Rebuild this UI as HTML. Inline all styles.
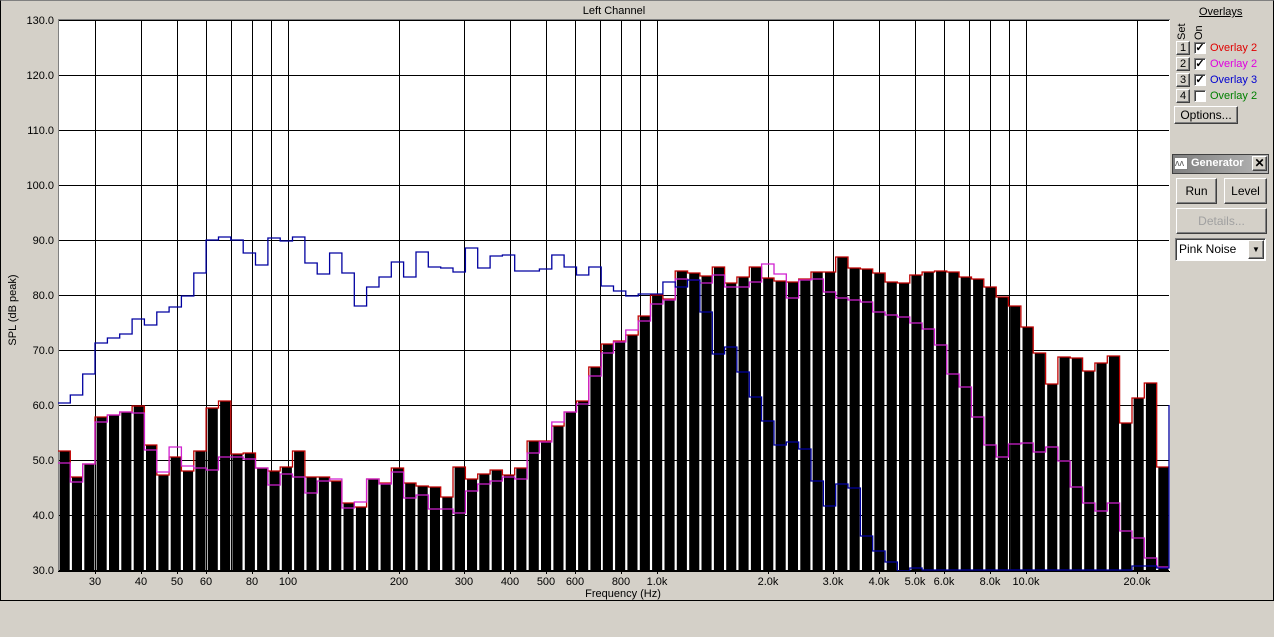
<!DOCTYPE html>
<html><head><meta charset="utf-8"><style>
body{margin:0;width:1274px;height:637px;background:#d4d0c8;font-family:"Liberation Sans",Arial,sans-serif;font-size:11px;overflow:hidden;position:relative}
.a{position:absolute}
.btn{position:absolute;background:#d4d0c8;border:1px solid;border-color:#fff #404040 #404040 #fff;box-shadow:inset -1px -1px 0 #808080;text-align:center;box-sizing:border-box;font-size:12px}
.cb{position:absolute;width:12px;height:12px;background:#fff;border:1px solid;border-color:#808080 #fff #fff #808080;box-shadow:inset 1px 1px 0 #404040;box-sizing:border-box;font-size:11px;line-height:10px;text-align:center;font-weight:bold}
</style></head><body>
<div class="a" style="left:0;top:0;width:1272px;height:599px;border:1px solid #000;border-top-color:#808080"></div>
<svg class="a" style="left:0;top:0" width="1274" height="637" id="s"></svg>
<div class="a" style="left:1199px;top:6px;font-size:11px;text-decoration:underline">Overlays</div>
<div class="a" style="left:1176px;top:24px;transform:rotate(-90deg);transform-origin:left top;top:40px">Set</div>
<div class="a" style="left:1193px;top:40px;transform:rotate(-90deg);transform-origin:left top">On</div>
<div class="btn" style="left:1176px;top:41px;width:14px;height:14px;line-height:12px;font-size:11px">1</div>
<div class="btn" style="left:1176px;top:57px;width:14px;height:14px;line-height:12px;font-size:11px">2</div>
<div class="btn" style="left:1176px;top:73px;width:14px;height:14px;line-height:12px;font-size:11px">3</div>
<div class="btn" style="left:1176px;top:89px;width:14px;height:14px;line-height:12px;font-size:11px">4</div>
<div class="cb" style="left:1194px;top:42px">✓</div>
<div class="cb" style="left:1194px;top:58px">✓</div>
<div class="cb" style="left:1194px;top:74px">✓</div>
<div class="cb" style="left:1194px;top:90px"></div>
<div class="a" style="left:1210px;top:42px;color:#e00000">Overlay 2</div>
<div class="a" style="left:1210px;top:58px;color:#e000e0">Overlay 2</div>
<div class="a" style="left:1210px;top:74px;color:#0000d0">Overlay 3</div>
<div class="a" style="left:1210px;top:90px;color:#008000">Overlay 2</div>
<div class="btn" style="left:1174px;top:106px;width:64px;height:18px;line-height:16px">Options...</div>
<div class="a" style="left:1172px;top:154px;width:97px;height:20px;border:1px solid #404040;box-sizing:border-box;background:linear-gradient(90deg,#808080,#b5b5b5)"></div>
<div class="a" style="left:1174px;top:157px;width:14px;height:13px;background:#fff;border:1px solid #808080;box-sizing:border-box;font-size:9px;line-height:11px;color:#555">ʌʌ</div>
<div class="a" style="left:1191px;top:157px;color:#fff;font-weight:bold;font-size:11px;width:60px;overflow:hidden;white-space:nowrap">Generator</div>
<div class="btn" style="left:1252px;top:156px;width:15px;height:15px;line-height:13px;font-weight:bold">✕</div>
<div class="btn" style="left:1176px;top:178px;width:41px;height:26px;line-height:24px">Run</div>
<div class="btn" style="left:1224px;top:178px;width:43px;height:26px;line-height:24px">Level</div>
<div class="btn" style="left:1176px;top:208px;width:91px;height:26px;line-height:24px;color:#a0a0a0">Details...</div>
<div class="a" style="left:1175px;top:238px;width:91px;height:23px;background:#fff;border:1px solid;border-color:#808080 #fff #fff #808080;box-shadow:inset 1px 1px 0 #404040;box-sizing:border-box;font-size:12px;line-height:21px;padding-left:3px">Pink Noise</div>
<div class="btn" style="left:1248px;top:240px;width:16px;height:19px;line-height:17px;font-size:8px">▼</div>
<script>
var R=[451,477,464,417,415,412,406,445,475,457,471,451,408,401,454,453,468,471,467,451,477,477,481,503,507,479,483,468,483,486,487,497,467,479,474,470,475,468,441,441,426,412,401,367,344,341,335,316,295,299,271,273,276,267,283,277,267,278,281,282,279,272,272,257,268,269,273,282,283,275,272,271,272,277,279,287,297,306,327,353,384,357,358,371,363,356,423,398,383,467];
var M=[463,482,464,422,415,412,413,450,472,447,466,468,470,457,457,459,468,485,474,477,493,481,479,508,502,479,484,472,498,495,509,509,513,491,484,481,477,479,453,442,422,412,404,376,353,342,330,321,304,300,279,280,283,275,287,287,282,264,274,298,280,279,292,298,300,302,312,315,317,323,329,345,374,387,417,445,457,444,443,452,447,461,487,503,511,503,531,538,558,567];
var B=[403,395,374,343,338,334,319,325,312,307,296,273,240,237,240,253,265,238,241,237,263,274,253,273,306,287,277,262,277,252,267,268,272,248,268,256,255,271,271,269,255,267,275,267,286,291,296,294,294,282,287,280,312,354,347,372,397,421,445,442,449,481,506,484,488,536,551,562,571,568];
while(B.length<90)B.push(570);B[87]=566;B[88]=566;B[89]=568;
var X0=58,W=(1169-58)/90,h='';
h+='<rect x="58" y="19" width="1112" height="553" fill="#fff"/>';
h+='<line x1="58.5" y1="19" x2="58.5" y2="572" stroke="#808080"/><line x1="58" y1="19.5" x2="1170" y2="19.5" stroke="#808080"/>';
function fx(f){return 288+369*Math.log10(f/100)}
var g='';
for(var v=0;v<=10;v++){var y=20+55*v;g+='<line x1="59" x2="1169" y1="'+(y+.5)+'" y2="'+(y+.5)+'" stroke="#000"/>';
h+='<text x="54" y="'+(y+4)+'" text-anchor="end">'+(130-10*v)+'.0</text>';}
var fs=[30,40,50,60,70,80,90,100,200,300,400,500,600,700,800,900,1000,2000,3000,4000,5000,6000,7000,8000,9000,10000,20000];
fs.forEach(function(f){var x=Math.round(fx(f))+.5;g+='<line y1="20" y2="571" x1="'+x+'" x2="'+x+'" stroke="#000"/>';});
h+=g;
var lab=[[30,'30'],[40,'40'],[50,'50'],[60,'60'],[80,'80'],[100,'100'],[200,'200'],[300,'300'],[400,'400'],[500,'500'],[600,'600'],[800,'800'],[1000,'1.0k'],[2000,'2.0k'],[3000,'3.0k'],[4000,'4.0k'],[5000,'5.0k'],[6000,'6.0k'],[8000,'8.0k'],[10000,'10.0k'],[20000,'20.0k']];
lab.forEach(function(l){var x=Math.round(fx(l[0]));h+='<line x1="'+(x+.5)+'" x2="'+(x+.5)+'" y1="571" y2="574" stroke="#000"/><text x="'+x+'" y="585" text-anchor="middle">'+l[1]+'</text>';});
for(var i=0;i<90;i++){var x=X0+W*i;h+='<rect x="'+(x+1.6).toFixed(1)+'" y="'+R[i]+'" width="'+(W-2.2).toFixed(1)+'" height="'+(571-R[i])+'" fill="#000"/>';}
function step(a,c){var d='M'+X0+','+a[0];for(var i=0;i<a.length;i++){var x0=X0+W*i,x1=X0+W*(i+1);if(i>0)d+='V'+a[i];d+='H'+x1.toFixed(1);}return '<path d="'+d+'" fill="none" stroke="'+c+'" stroke-width="1.3"/>';}
h+=step(R,'#c00000');h+=step(M,'#d020d0');
var bp=step(B,'#0000a0');h+=bp.replace('" fill','V405" fill');
h+='<line x1="58" x2="1170" y1="571.5" y2="571.5" stroke="#000"/>';
h+='<text x="614" y="14" text-anchor="middle">Left Channel</text>';
h+='<text x="623" y="597" text-anchor="middle">Frequency (Hz)</text>';
h+='<text transform="translate(16,310) rotate(-90)" text-anchor="middle">SPL (dB peak)</text>';
var s=document.getElementById('s');s.setAttribute('font-family','Liberation Sans, Arial, sans-serif');s.setAttribute('font-size','11');s.innerHTML=h;
</script>
</body></html>
